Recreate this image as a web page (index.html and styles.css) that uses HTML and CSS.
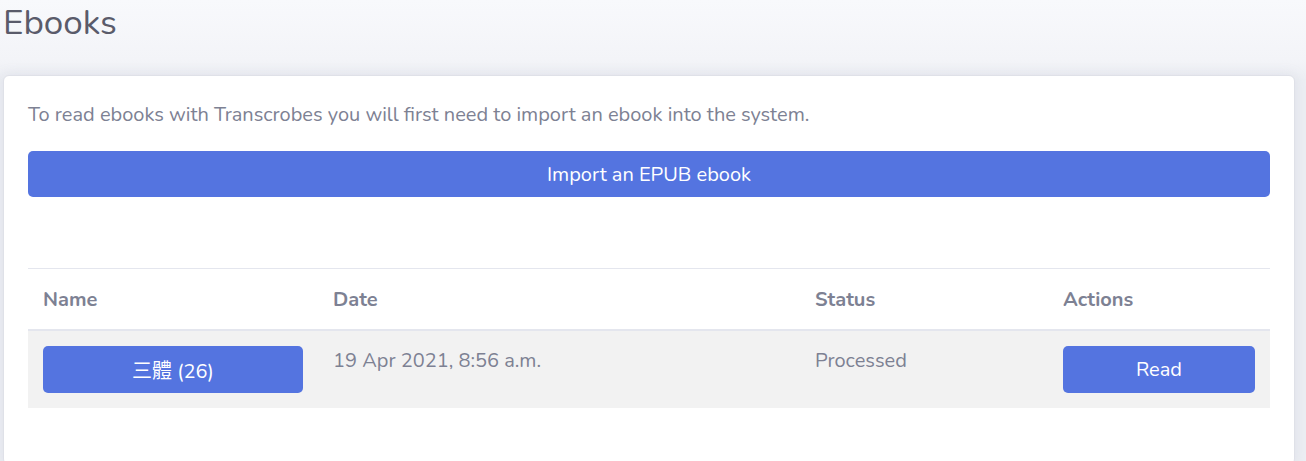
FILE: index.html
```html
<!DOCTYPE html>
<html>
<head>
<meta charset="utf-8">
<link rel="stylesheet" href="styles.css">
</head>
<body>
<div class="page">
  <h1 class="title">Ebooks</h1>
  <div class="card">
    <p class="intro">To read ebooks with Transcrobes you will first need to import an ebook into the system.</p>
    <button class="btn btn-wide">Import an EPUB ebook</button>
    <table class="table">
      <thead>
        <tr>
          <th class="c-name">Name</th>
          <th class="c-date">Date</th>
          <th class="c-status">Status</th>
          <th class="c-actions">Actions</th>
        </tr>
      </thead>
      <tbody>
        <tr>
          <td><button class="btn btn-cell">三體 (26)</button></td>
          <td>19 Apr 2021, 8:56 a.m.</td>
          <td>Processed</td>
          <td><button class="btn btn-cell btn-read">Read</button></td>
        </tr>
      </tbody>
    </table>
  </div>
</div>
</body>
</html>
```

FILE: styles.css
```css
html, body {
  margin: 0;
  padding: 0;
}
body {
  background: linear-gradient(#f8f9fc 0px, #f3f4f8 60px, #eceef3 80px, #eceef3 100%);
  font-family: "Nunito", "Noto Sans CJK TC", sans-serif;
  color: #7d8193;
  height: 461px;
  overflow: hidden;
}
.page {
  padding: 0 11px 0 3px;
}
.title {
  margin: 0;
  height: 75px;
  padding-top: 2px;
  box-sizing: border-box;
  font-size: 35px;
  font-weight: 400;
  line-height: 42px;
  color: #5a5b6a;
}
.card {
  background: #fff;
  border: 1px solid #dfe1e8;
  border-radius: 6px;
  padding: 24px 24px 56px 24px;
  box-shadow: 0 0 12px rgba(180, 185, 205, 0.25);
}
.intro {
  margin: 0 0 21px 0;
  font-size: 20px;
  line-height: 30px;
  color: #7d8193;
}
.btn {
  display: block;
  border: 0;
  background: #5474e0;
  color: #fff;
  font-family: "Nunito", "Noto Sans CJK TC", sans-serif;
  font-size: 20px;
  border-radius: 5px;
  cursor: pointer;
}
.btn-wide {
  width: 100%;
  height: 46px;
  margin-bottom: 71px;
}
.table {
  width: 100%;
  border-collapse: collapse;
  border-top: 1px solid #e4e6ee;
  font-size: 20px;
}
.table th {
  text-align: left;
  font-weight: 700;
  color: #7d8193;
  height: 60px;
  padding: 0 15px;
  border-bottom: 2px solid #e4e6ee;
}
.c-name { width: 260px; }
.c-date { width: 452px; }
.c-status { width: 218px; }
.table td {
  background: #f2f2f2;
  vertical-align: top;
  padding: 15px;
  line-height: 30px;
}
.btn-cell {
  width: 100%;
  height: 47px;
}
```
